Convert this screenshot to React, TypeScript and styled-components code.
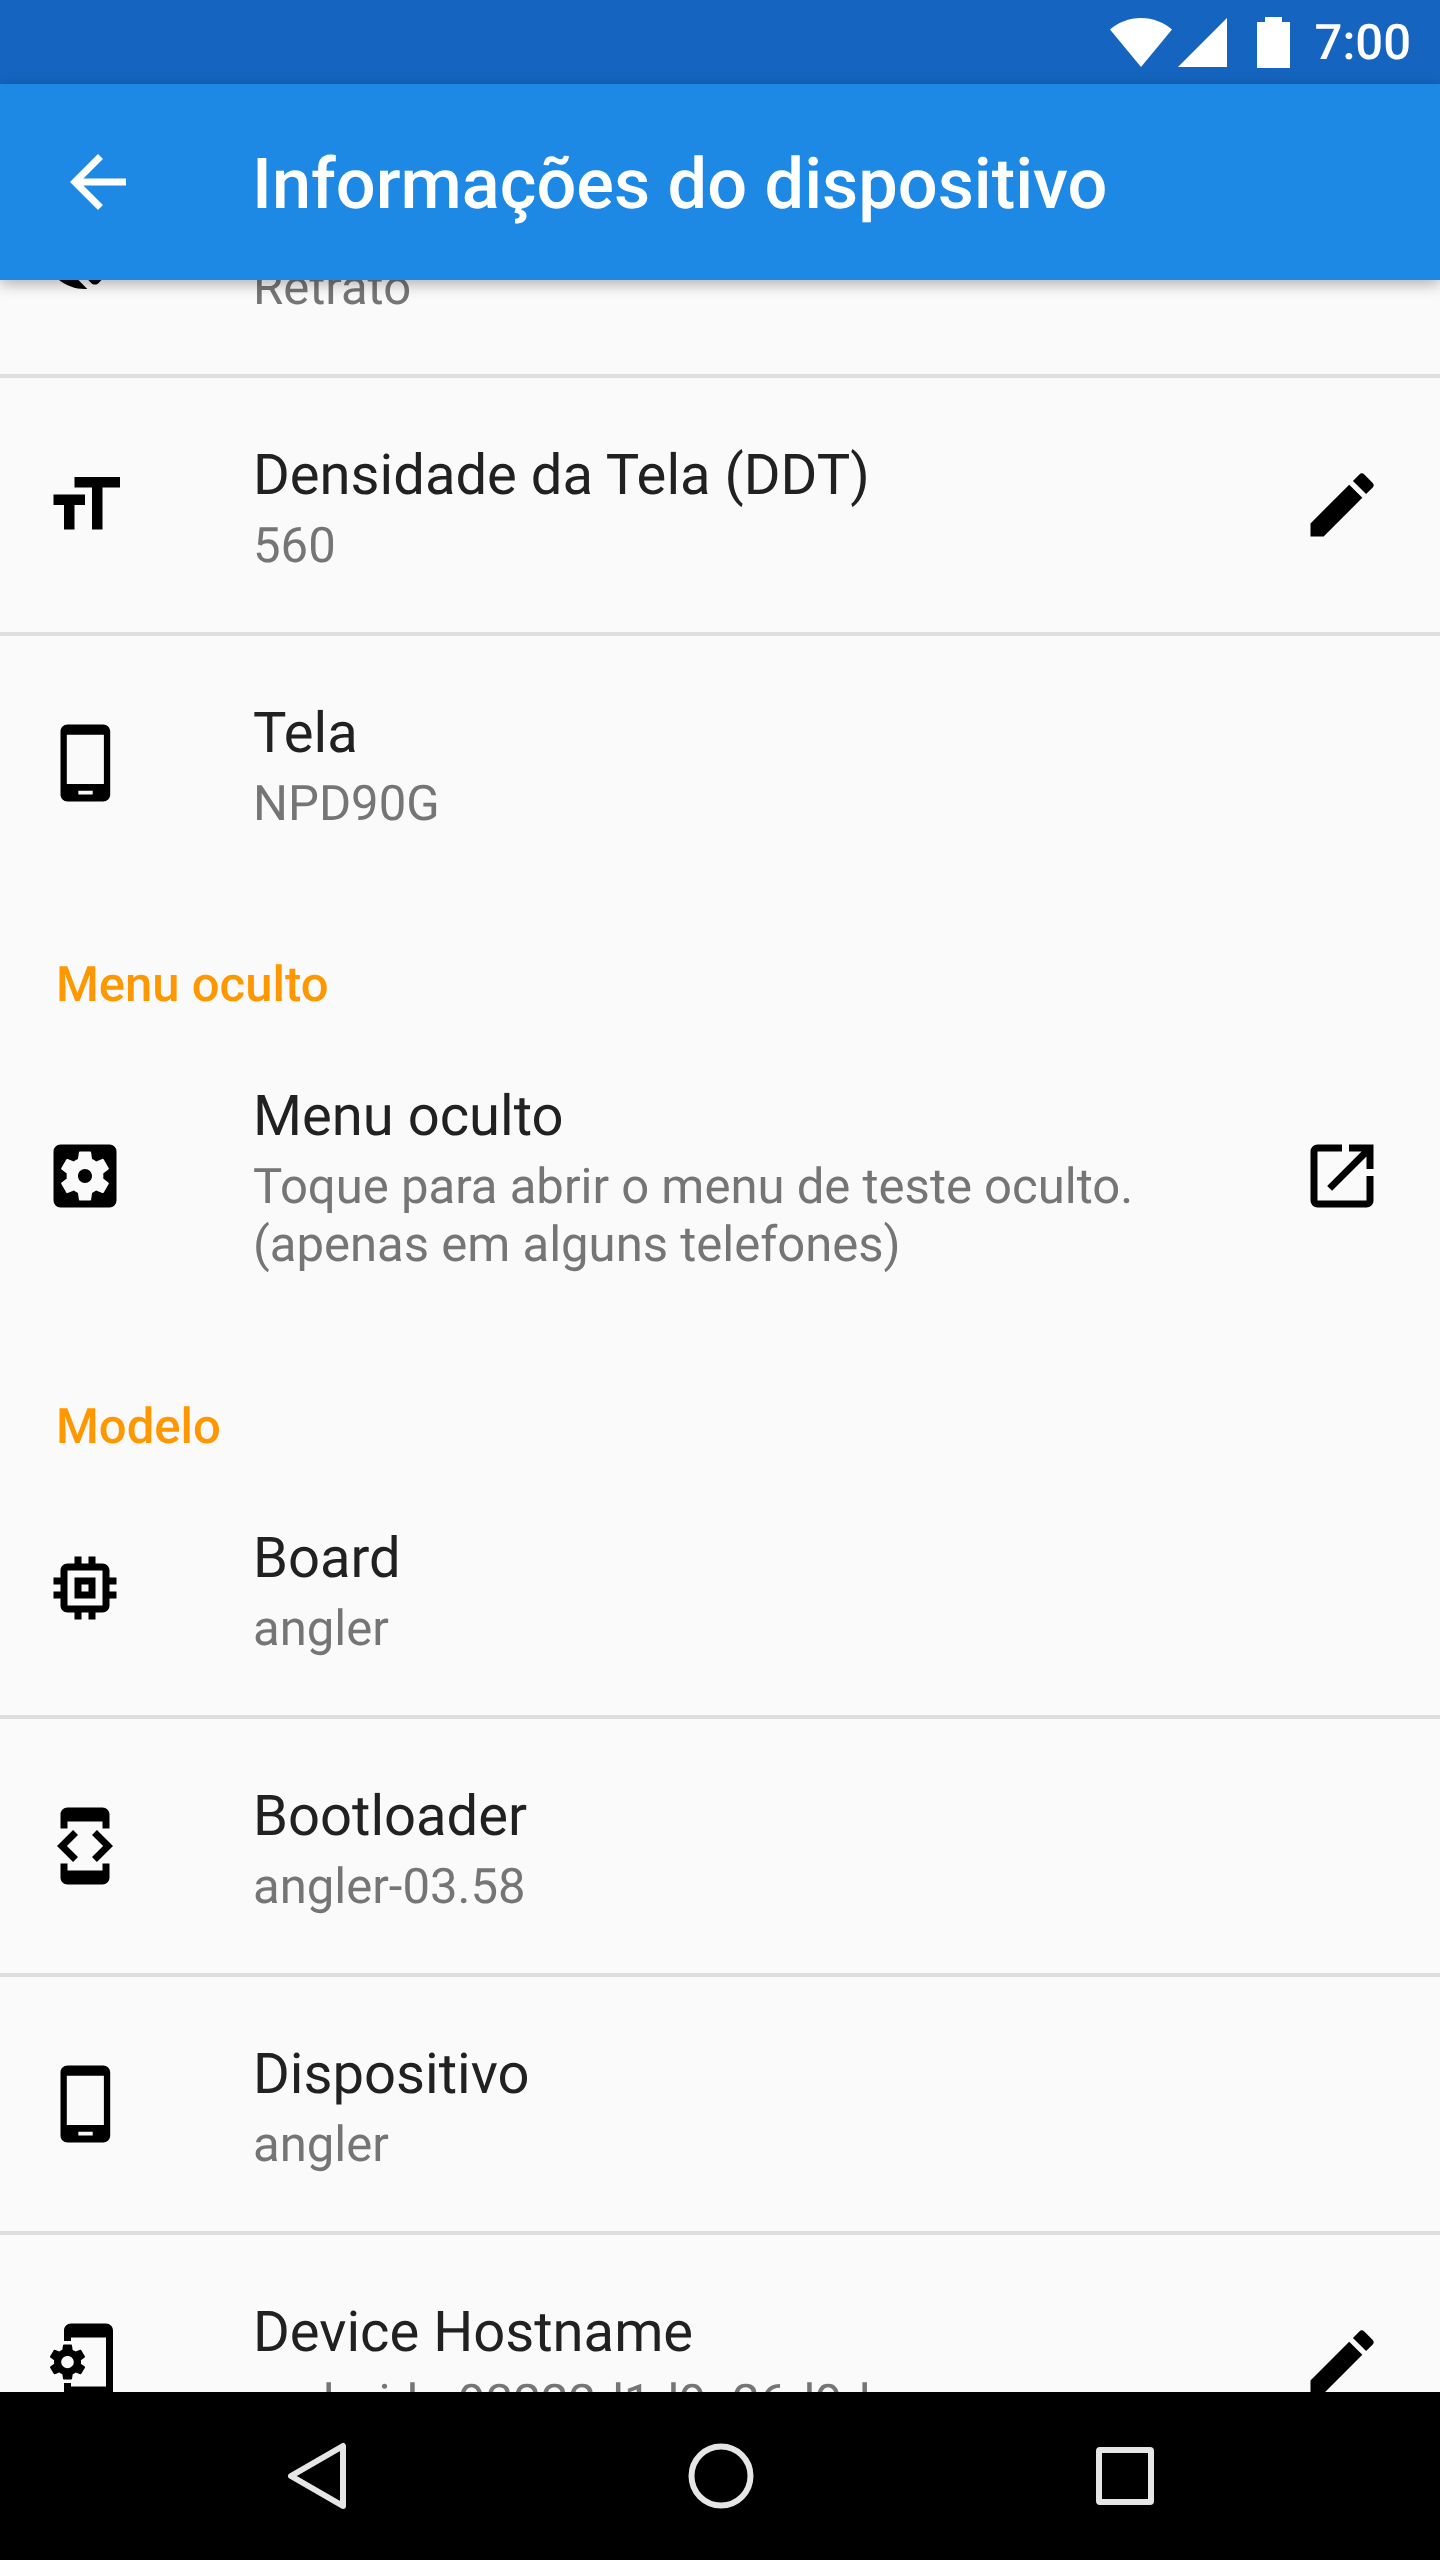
import React from "react";
import styled, { createGlobalStyle } from "styled-components";
import {
  MdArrowBack,
  MdDeveloperMode,
  MdEdit,
  MdFormatSize,
  MdMemory,
  MdOpenInNew,
  MdPhonelinkSetup,
  MdScreenRotation,
  MdSettingsApplications,
} from "react-icons/md";

const GlobalStyle = createGlobalStyle`
  html, body { margin: 0; padding: 0; background: #fafafa; }
  * { box-sizing: border-box; }
`;

const Screen = styled.div`
  width: 1440px;
  height: 2560px;
  display: flex;
  flex-direction: column;
  overflow: hidden;
  background: #fafafa;
  font-family: Roboto, "Noto Sans", sans-serif;
  text-rendering: geometricPrecision;
`;

const StatusBar = styled.div`
  height: 84px;
  flex: none;
  background: #1565c0;
  display: flex;
  align-items: center;
  justify-content: flex-end;
  padding-right: 29px;
  color: #fff;
`;

const StatusIcons = styled.div`
  display: flex;
  align-items: center;
  margin-right: 25px;
`;

const StatusIcon = styled.svg<{ $gap?: number }>`
  display: block;
  fill: #fff;
  margin-right: ${(p) => p.$gap ?? 0}px;
`;

const Clock = styled.span`
  font-size: 49px;
  font-weight: 500;
  line-height: 84px;
  padding-top: 2px;
`;

const AppBar = styled.header`
  height: 196px;
  flex: none;
  display: flex;
  align-items: center;
  padding-left: 56px;
  background: #1e88e5;
  color: #fff;
  position: relative;
  z-index: 2;
  box-shadow: 0 4px 14px rgba(0, 0, 0, 0.3);
`;

const Title = styled.h1`
  margin: 0 0 0 112px;
  padding-top: 6px;
  font-size: 70.3px;
  font-weight: 500;
  line-height: 82px;
  white-space: nowrap;
`;

const Content = styled.main`
  flex: 1;
  min-height: 0;
  overflow: hidden;
`;

const ScrollList = styled.div`
  margin-top: -160px;
`;

const Row = styled.div<{ $divider?: boolean; $height?: number }>`
  height: ${(p) => (p.$height ?? 254) + (p.$divider ? 4 : 0)}px;
  display: flex;
  align-items: center;
  padding: 0 56px 0 43px;
  border-bottom: ${(p) => (p.$divider ? "4px solid #dedede" : "none")};
`;

const IconSlot = styled.div`
  width: 84px;
  height: 84px;
  flex: none;
  color: #000;
  svg { display: block; width: 84px; height: 84px; fill: currentColor; }
`;

const RowText = styled.div`
  flex: 1;
  min-width: 0;
  margin-left: 126px;
  padding: 5px 40px 0 0;
`;

const RowTitle = styled.div`
  font-size: 56.15px;
  line-height: 66px;
  color: #212121;
  margin-bottom: 8px;
`;

const RowSub = styled.div`
  font-size: 49.05px;
  line-height: 58px;
  color: #757575;
`;

const SectionHeader = styled.div<{ $bottom: number }>`
  height: 132px;
  display: flex;
  align-items: flex-end;
  padding: 0 0 ${(p) => p.$bottom}px 56px;
  font-size: 49px;
  line-height: 58px;
  font-weight: 500;
  color: #ff9800;
`;

const NavBar = styled.nav`
  height: 168px;
  flex: none;
  background: #000;
  display: flex;
  align-items: center;
  justify-content: center;
  padding-left: 2px;
  position: relative;
  z-index: 2;
`;

const NavButton = styled.div`
  width: 404px;
  display: flex;
  justify-content: center;
  svg { display: block; fill: none; stroke: #e6e6e6; stroke-width: 6; stroke-linejoin: round; }
`;

const PortraitPhone = () => (
  <svg viewBox="0 0 24 24">
    <path
      fillRule="evenodd"
      d="M7 1h10.2c1.1 0 2 .9 2 2v18c0 1.1-.9 2-2 2H7c-1.1 0-2-.9-2-2V3c0-1.1.9-2 2-2zM6.8 3.9V18h10.6V3.9H6.8zM10.1 19.9V21h4.1v-1.1h-4.1z"
    />
  </svg>
);

type Item = {
  icon: React.ReactNode;
  title: string;
  sub: React.ReactNode;
  action?: React.ReactNode;
  divider?: boolean;
  height?: number;
};

const ItemRow = ({ icon, title, sub, action, divider, height }: Item) => (
  <Row $divider={divider} $height={height}>
    <IconSlot>{icon}</IconSlot>
    <RowText>
      <RowTitle>{title}</RowTitle>
      <RowSub>{sub}</RowSub>
    </RowText>
    {action && <IconSlot>{action}</IconSlot>}
  </Row>
);

export default function App() {
  return (
    <Screen>
      <GlobalStyle />
      <StatusBar>
        <StatusIcons>
          <StatusIcon $gap={6} width="62" height="49" viewBox="0 0 62 49">
            <path d="M0 11.5C8 4.5 19 0 31 0s23 4.5 31 11.5L31 49z" />
          </StatusIcon>
          <StatusIcon $gap={30} width="49" height="49" viewBox="0 0 49 49">
            <path d="M49 0v49H0z" />
          </StatusIcon>
          <StatusIcon width="33" height="51" viewBox="0 0 33 51">
            <path d="M8 0h17v5h8v46H0V5h8z" />
          </StatusIcon>
        </StatusIcons>
        <Clock>7:00</Clock>
      </StatusBar>

      <AppBar>
        <MdArrowBack size={84} />
        <Title>Informações do dispositivo</Title>
      </AppBar>

      <Content>
        <ScrollList>
          <ItemRow icon={<MdScreenRotation />} title="Orientação" sub="Retrato" divider />
          <ItemRow
            icon={<MdFormatSize />}
            title="Densidade da Tela (DDT)"
            sub="560"
            action={<MdEdit />}
            divider
          />
          <ItemRow icon={<PortraitPhone />} title="Tela" sub="NPD90G" />

          <SectionHeader $bottom={8}>Menu oculto</SectionHeader>
          <ItemRow
            icon={<MdSettingsApplications />}
            title="Menu oculto"
            sub="Toque para abrir o menu de teste oculto. (apenas em alguns telefones)"
            action={<MdOpenInNew />}
            height={307}
          />

          <SectionHeader $bottom={5}>Modelo</SectionHeader>
          <ItemRow icon={<MdMemory />} title="Board" sub="angler" divider />
          <ItemRow icon={<MdDeveloperMode />} title="Bootloader" sub="angler-03.58" divider />
          <ItemRow icon={<PortraitPhone />} title="Dispositivo" sub="angler" divider />
          <ItemRow
            icon={<MdPhonelinkSetup />}
            title="Device Hostname"
            sub="android-a93222d1d9c26d9d"
            action={<MdEdit />}
          />
        </ScrollList>
      </Content>

      <NavBar>
        <NavButton>
          <svg width="60" height="70" viewBox="0 0 60 70">
            <path d="M5 35 57 5v60z" transform="translate(-1 0)" />
          </svg>
        </NavButton>
        <NavButton>
          <svg width="66" height="66" viewBox="0 0 66 66">
            <circle cx="33" cy="33" r="29.5" />
          </svg>
        </NavButton>
        <NavButton>
          <svg width="58" height="58" viewBox="0 0 58 58">
            <rect x="3" y="3" width="52" height="52" rx="1" />
          </svg>
        </NavButton>
      </NavBar>
    </Screen>
  );
}
